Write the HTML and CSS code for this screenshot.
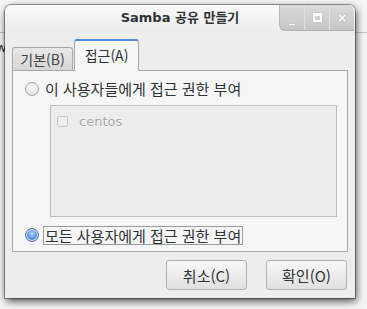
FILE: index.html
```html
<!DOCTYPE html>
<html lang="ko">
  <head>
    <meta charset="UTF-8" />
    <title>Samba 공유 만들기</title>
    <link rel="stylesheet" href="styles.css">
  </head>
  <body>
    <!-- window behind the dialog -->
    <div class="behind">
      <div class="behind-bar"></div>
      <div class="behind-text">w</div>
    </div>

    <div class="dialog">
      <div class="titlebar">
        <div class="title">Samba 공유 만들기</div>
        <div class="wm-buttons">
          <div class="wm-btn">_</div>
          <div class="wm-btn"><span class="max-box"></span></div>
          <div class="wm-btn">×</div>
        </div>
      </div>

      <div class="body">
        <div class="tabs">
          <div class="tab">기본(B)</div>
          <div class="tab active">접근(A)</div>
        </div>
        <div class="panel">
          <label class="radio-row">
            <span class="radio"></span>
            <span class="label">이 사용자들에게 접근 권한 부여</span>
          </label>
          <div class="user-list">
            <div class="user">
              <span class="check"></span>
              <span class="user-name">centos</span>
            </div>
          </div>
          <label class="radio-row second">
            <span class="radio on"></span>
            <span class="label focus">모든 사용자에게 접근 권한 부여</span>
          </label>
        </div>

        <div class="actions">
          <button class="btn">취소(C)</button>
          <button class="btn">확인(O)</button>
        </div>
      </div>
    </div>
  </body>
</html>
```

FILE: styles.css
```css
body {
  margin: 0;
  width: 367px;
  height: 309px;
  overflow: hidden;
  background: #f6f6f6;
  font-family: "Noto Sans CJK KR", "DejaVu Sans", sans-serif;
  color: #2e3436;
  position: relative;
}
.behind {
  position: absolute;
  top: 0;
  left: 0;
  right: 0;
  height: 60px;
}
.behind-bar {
  margin-top: 32px;
  height: 1px;
  background: #c8c8c8;
}
.behind-text {
  position: absolute;
  left: -4px;
  top: 40px;
  font-family: "DejaVu Sans", sans-serif;
  font-size: 13px;
  color: #333;
}
.dialog {
  position: absolute;
  left: 5px;
  top: 5px;
  width: 350px;
  height: 293px;
  background: #ededed;
  border-radius: 6px 6px 0 0;
  box-shadow: 0 0 0 1px rgba(0,0,0,0.35), 1px 3px 8px rgba(0,0,0,0.75);
  display: flex;
  flex-direction: column;
}
.titlebar {
  height: 25px;
  display: flex;
  position: relative;
  background: linear-gradient(#fafafa, #ededed);
  border-radius: 6px 6px 0 0;
}
.title {
  flex: 1;
  text-align: center;
  font-family: "DejaVu Sans", "Noto Sans CJK KR", sans-serif;
  font-weight: bold;
  font-size: 13px;
  line-height: 25px;
}
.wm-buttons {
  position: absolute;
  right: 1px;
  top: 0;
  height: 25px;
  display: flex;
  background: linear-gradient(#dadada, #c6c6c6);
  border-radius: 0 6px 0 6px;
  border-left: 1px solid #b8b8b8;
  border-bottom: 1px solid #b0b0b0;
}
.wm-btn {
  width: 24px;
  text-align: center;
  color: #fff;
  font-family: "DejaVu Sans", sans-serif;
  font-weight: bold;
  font-size: 12px;
  line-height: 24px;
  text-shadow: 0 0 1px #999;
  border-left: 1px solid #e0e0e0;
  display: flex;
  align-items: center;
  justify-content: center;
}
.wm-btn:first-child {
  border-left: none;
}
.max-box {
  width: 5px;
  height: 4px;
  border: 2px solid #fff;
  border-top-width: 3px;
  box-shadow: 0 0 1px #999;
}
.body {
  flex: 1;
  padding: 9px 7px 0 7px;
  display: flex;
  flex-direction: column;
}
.tabs {
  display: flex;
  align-items: flex-end;
  height: 31px;
}
.tab {
  height: 23px;
  width: 61px;
  box-sizing: border-box;
  border: 1px solid #a8a8a8;
  border-bottom: none;
  border-radius: 3px 3px 0 0;
  background: linear-gradient(#e8e8e8, #d6d6d6);
  font-size: 14px;
  line-height: 22px;
  text-align: center;
  color: #444;
}
.tab.active {
  width: 65px;
  height: 32px;
  margin-left: 1px;
  margin-bottom: -1px;
  background: #f6f6f6;
  border-top: 2px solid #4a90d9;
  line-height: 28px;
  color: #2e3436;
  position: relative;
  z-index: 1;
}
.panel {
  height: 182px;
  box-sizing: border-box;
  border: 1px solid #a8a8a8;
  background: #f6f6f6;
  padding: 10px 10px 0 12px;
  display: flex;
  flex-direction: column;
}
.radio-row {
  display: flex;
  align-items: center;
  height: 16px;
}
.radio {
  width: 14px;
  height: 14px;
  box-sizing: border-box;
  border-radius: 50%;
  border: 1px solid #a6a6a6;
  background: radial-gradient(circle at 50% 35%, #ffffff, #e2e2e2 80%);
  margin-right: 6px;
}
.radio.on {
  border-color: #5f7fa8;
  background: radial-gradient(circle at 50% 40%, #b8d8ff 0, #4f8fe0 55%, #2f6cc0 100%);
  box-shadow: inset 0 0 0 1px #dde8f5;
}
.label {
  font-size: 15px;
  line-height: 16px;
}
.label.focus {
  border: 1px solid #9a9a9a;
  padding: 1px 1px 0;
  margin-left: -2px;
}
.user-list {
  margin: 8px 0 0 25px;
  height: 112px;
  box-sizing: border-box;
  border: 1px solid #bdbdbd;
  background: #ececec;
  padding: 8px 0 0 6px;
}
.user {
  display: flex;
  align-items: center;
  height: 15px;
}
.check {
  width: 11px;
  height: 11px;
  box-sizing: border-box;
  border: 1px solid #c4c4c4;
  border-radius: 2px;
  background: #efefef;
  margin-right: 11px;
}
.user-name {
  font-family: "DejaVu Sans", sans-serif;
  font-size: 13px;
  color: #a8a8a8;
  text-shadow: 0 1px 0 #fff;
}
.second {
  margin-top: 10px;
}
.actions {
  display: flex;
  justify-content: flex-end;
  gap: 19px;
  padding: 8px 1px 0 0;
}
.btn {
  width: 81px;
  height: 30px;
  border: 1px solid #b0b0b0;
  border-radius: 3px;
  background: linear-gradient(#f8f8f8, #e0e0e0);
  font-family: "Noto Sans CJK KR", "DejaVu Sans", sans-serif;
  font-size: 15px;
  color: #2e3436;
  padding: 0;
}
```
